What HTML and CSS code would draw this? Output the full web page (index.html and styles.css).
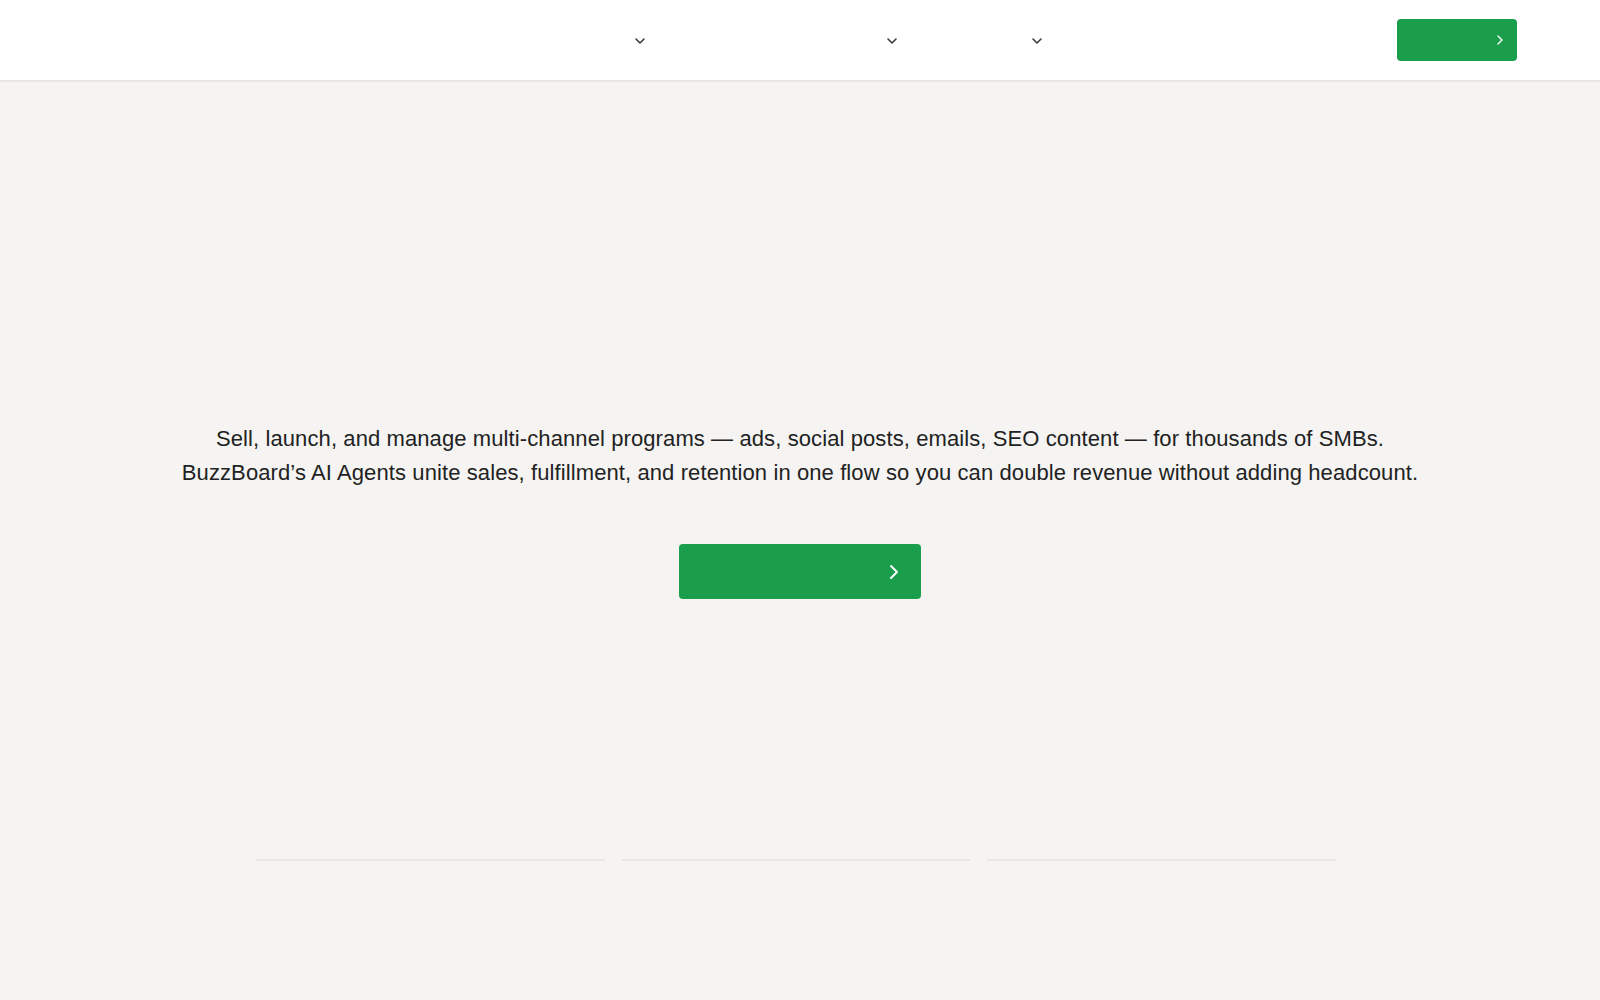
FILE: index.html
```html
<!DOCTYPE html>
<html lang="en">
<head>
<meta charset="utf-8">
<title>BuzzBoard</title>
<link rel="stylesheet" href="styles.css">
</head>
<body>
<header class="site-header">
  <div class="header-inner">
    <nav class="nav">
      <div class="nav-item item-1">
        <span class="nav-label"></span>
        <svg class="chev-down" viewBox="0 0 24 24" width="16" height="16"><path d="m6 9 6 6 6-6"/></svg>
      </div>
      <div class="nav-item item-2">
        <span class="nav-label"></span>
        <svg class="chev-down" viewBox="0 0 24 24" width="16" height="16"><path d="m6 9 6 6 6-6"/></svg>
      </div>
      <div class="nav-item item-3">
        <span class="nav-label"></span>
        <svg class="chev-down" viewBox="0 0 24 24" width="16" height="16"><path d="m6 9 6 6 6-6"/></svg>
      </div>
    </nav>
    <a class="btn btn-header" href="#">
      <svg class="chev-right" viewBox="0 0 24 24" width="16" height="16"><path d="m9 18 6-6-6-6"/></svg>
    </a>
  </div>
</header>
<main class="hero">
  <p class="hero-text">Sell, launch, and manage multi-channel programs — ads, social posts, emails, SEO content — for thousands of SMBs.<br>BuzzBoard’s AI Agents unite sales, fulfillment, and retention in one flow so you can double revenue without adding headcount.</p>
  <a class="btn btn-hero" href="#">
    <svg class="chev-right" viewBox="0 0 24 24" width="24" height="24"><path d="m9 18 6-6-6-6"/></svg>
  </a>
  <div class="stats">
    <div class="stat"></div>
    <div class="stat"></div>
    <div class="stat"></div>
  </div>
</main>
</body>
</html>
```

FILE: styles.css
```css
* { box-sizing: border-box; }
html, body { margin: 0; padding: 0; }
body {
  font-family: "Liberation Sans", Arial, sans-serif;
  background: #f5f4f2;
  color: #222;
  height: 1000px;
  overflow: hidden;
}
.site-header {
  background: #ffffff;
  height: 82px;
  border-bottom: 2px solid #e8e6e2;
}
.header-inner {
  height: 80px;
  display: flex;
  align-items: center;
  justify-content: space-between;
  padding: 0 83px 0 0;
}
.nav {
  display: flex;
  align-items: center;
  padding-left: 632px;
  margin-top: 1px;
}
.nav-item {
  display: flex;
  align-items: center;
  height: 16px;
}
.nav-label { display: block; height: 16px; }
.item-1 .nav-label { width: 0; }
.item-2 .nav-label { width: 236px; }
.item-3 .nav-label { width: 129px; }
.chev-down {
  fill: none;
  stroke: #3a3a3a;
  stroke-width: 2.4;
  stroke-linecap: round;
  stroke-linejoin: round;
  display: block;
}
.chev-right {
  fill: none;
  stroke: #ffffff;
  stroke-width: 2;
  stroke-linecap: round;
  stroke-linejoin: round;
  display: block;
}
.btn {
  display: flex;
  align-items: center;
  justify-content: flex-end;
  background: #1b9e4b;
  border-radius: 4px;
  text-decoration: none;
}
.btn-header {
  width: 120px;
  height: 42px;
  padding-right: 9px;
}
.hero {
  display: flex;
  flex-direction: column;
  align-items: center;
  padding-top: 340px;
}
.hero-text {
  margin: 0;
  font-size: 22px;
  letter-spacing: 0.1px;
  line-height: 34px;
  text-align: center;
  color: #222;
}
.btn-hero {
  margin-top: 54px;
  width: 242px;
  height: 55px;
  padding-right: 15px;
}
.stats {
  margin-top: 260px;
  width: 1088px;
  padding-right: 8px;
  display: grid;
  grid-template-columns: repeat(3, 1fr);
  gap: 17px;
}
.stat {
  border-top: 2px solid #e9e7e3;
  height: 80px;
}
```
